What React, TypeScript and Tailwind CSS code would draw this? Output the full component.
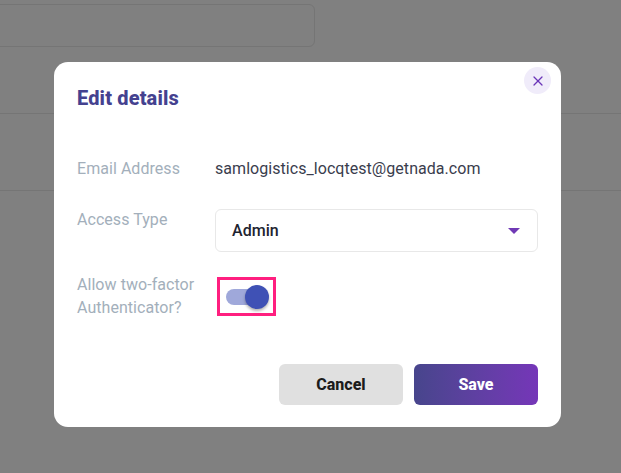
import { X } from "lucide-react";

const font = { fontFamily: "Roboto, sans-serif" };

export default function App() {
  return (
    <div className="relative h-[473px] w-[621px] overflow-hidden bg-[#808080]" style={font}>
      {/* dimmed page behind the modal */}
      <div className="flex h-full flex-col">
        <div className="mt-[4px] ml-[-20px] h-[43px] w-[335px] shrink-0 rounded-md border border-[#757575]" />
        <div className="mt-[66px] h-px w-full shrink-0 bg-[#757575]" />
        <div className="mt-[76px] h-px w-full shrink-0 bg-[#757575]" />
      </div>

      <div className="absolute inset-0 pt-[62px] pl-[54px]">
        <div className="relative flex h-[365px] w-[507px] flex-col rounded-[14px] bg-white pt-[24px] pl-[23px] pr-[23px]">
          <button className="absolute top-[5px] right-[10px] flex h-[27px] w-[27px] items-center justify-center rounded-full bg-[#f0ecfa] text-[#6a35b8]">
            <X size={16} strokeWidth={1.9} />
          </button>

          <h2 className="h-[24px] text-[20px] leading-[24px] font-extrabold tracking-[0.15px] text-[#44418f]">Edit details</h2>

          <div className="mt-[47px] flex h-[24px] items-center text-[16px] tracking-[0.05px]">
            <span className="w-[138px] text-[#a3afbb]">Email Address</span>
            <span className="text-[#3a3d4d]">samlogistics_locqtest@getnada.com</span>
          </div>

          <div className="mt-[28px] flex text-[16px] tracking-[0.05px]">
            <span className="w-[138px] leading-[22px] text-[#a3afbb]">Access Type</span>
            <div className="flex h-[43px] w-[323px] items-center justify-between rounded-md border border-[#e8e8e8] pr-[17px] pl-[16px]">
              <span className="font-medium text-[#1d2330]">Admin</span>
              <span className="h-0 w-0 border-x-[6px] border-t-[6px] border-x-transparent border-t-[#7039b5]" />
            </div>
          </div>

          <div className="mt-[21px] flex text-[16px] tracking-[0.05px]">
            <span className="w-[140px] leading-[23px] text-[#a3afbb]">
              Allow two-factor
              <br />
              Authenticator?
            </span>
            <div className="mt-[4px] flex h-[39px] w-[59px] items-center border-[3px] border-[#ff1f7f] pl-[6px]">
              <div className="relative h-[16px] w-[36px] rounded-full bg-[#9fa8da]">
                <div className="absolute top-[-4px] right-[-7px] h-[24px] w-[24px] rounded-full bg-[#3f51b5] shadow-[0_2px_3px_rgba(0,0,0,0.3)]" />
              </div>
            </div>
          </div>

          <div className="mt-[45px] flex justify-end gap-[11px]">
            <button className="h-[41px] w-[124px] rounded-md bg-[#e0e0e0] text-[16px] font-extrabold text-[#1c1c1c]">Cancel</button>
            <button className="h-[41px] w-[124px] rounded-md bg-gradient-to-r from-[#47458c] to-[#7536b8] text-[16px] font-extrabold text-white">Save</button>
          </div>
        </div>
      </div>
    </div>
  );
}
